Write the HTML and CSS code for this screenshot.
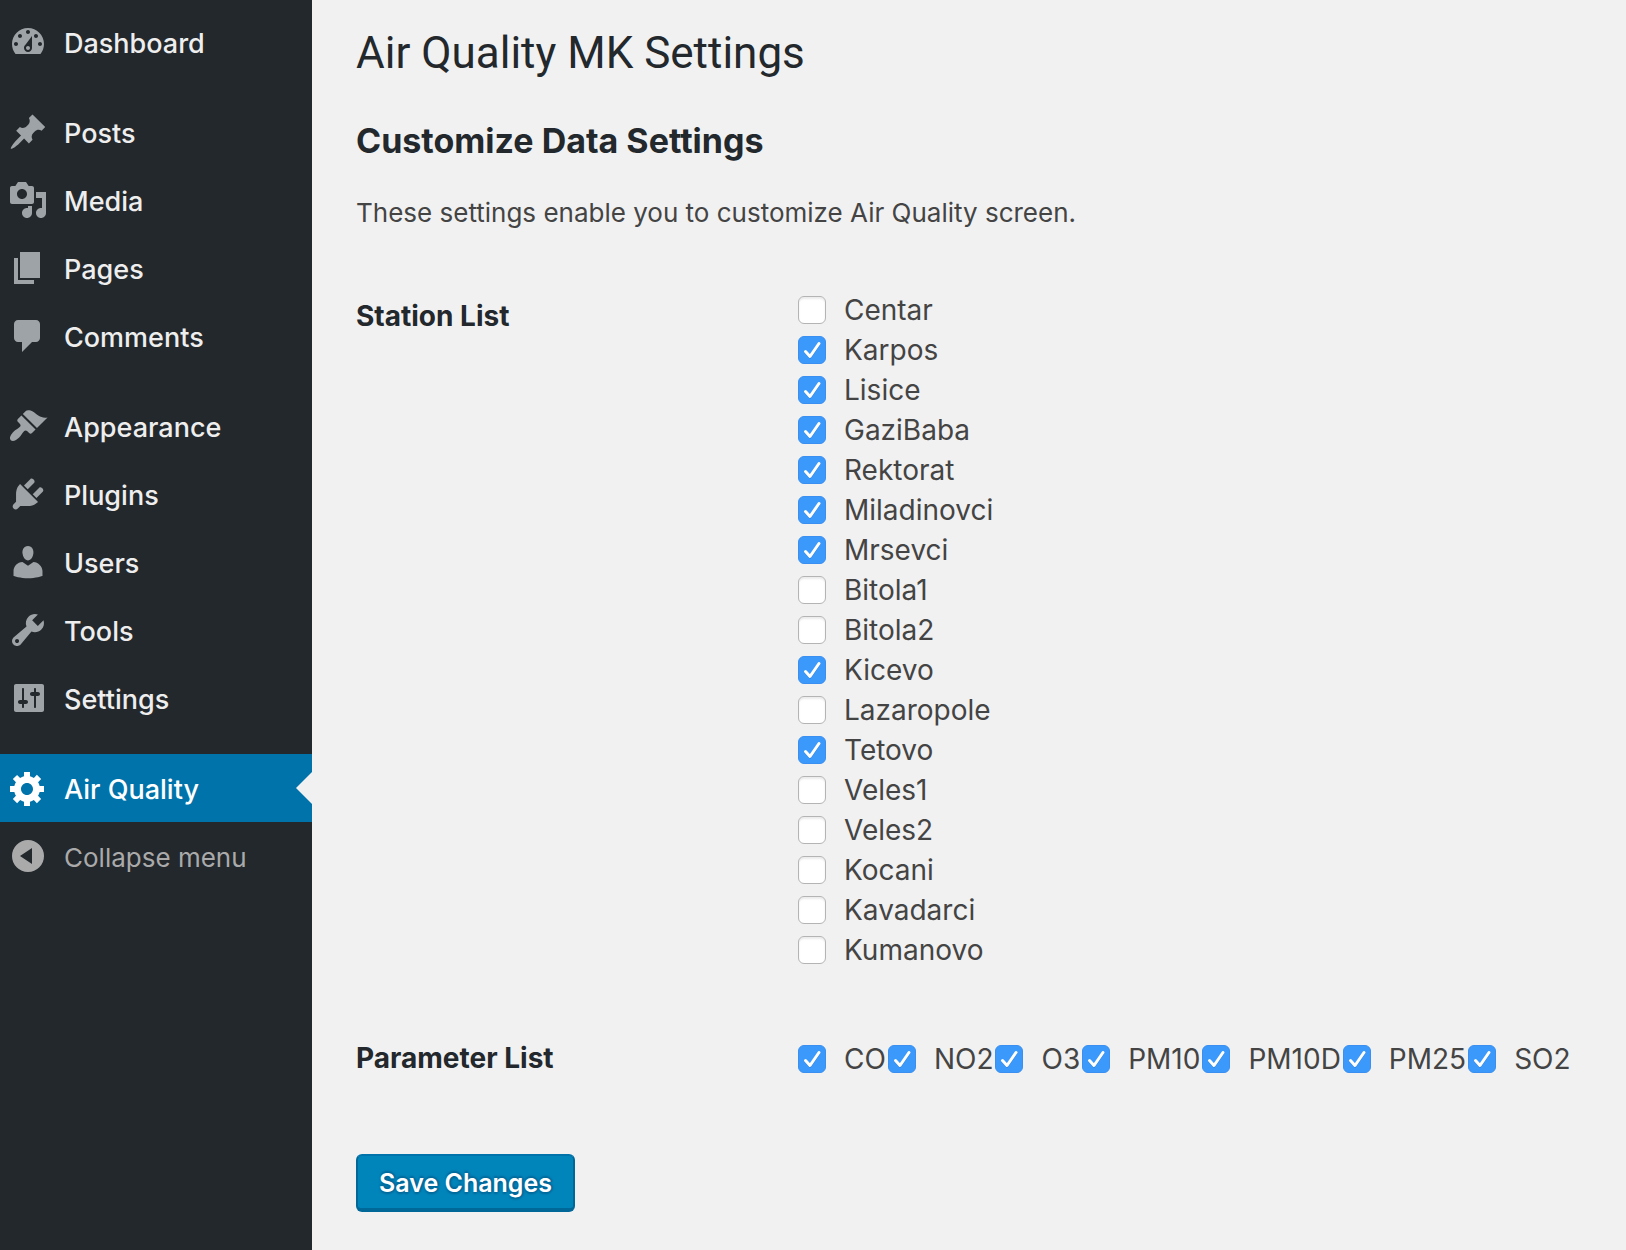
FILE: index.html
```html
<!DOCTYPE html>
<html lang="en">
<head>
<meta charset="utf-8">
<meta name="viewport" content="width=device-width, initial-scale=1">
<title>Air Quality MK Settings</title>
<link rel="stylesheet" href="styles.css">
</head>
<body>
<div class="layout">
  <nav class="sidebar" aria-label="Main menu">
    <ul class="menu">
      <li><a class="menu-item" href="#"><svg class="icon" viewBox="0 0 20 20"><path d="M3.76 16h12.48c1.1-1.37 1.76-3.11 1.76-5 0-4.42-3.58-8-8-8s-8 3.58-8 8c0 1.89.66 3.63 1.76 5zM10 4c.55 0 1 .45 1 1s-.45 1-1 1-1-.45-1-1 .45-1 1-1zM6 6c.55 0 1 .45 1 1s-.45 1-1 1-1-.45-1-1 .45-1 1-1zm8 0c.55 0 1 .45 1 1s-.45 1-1 1-1-.45-1-1 .45-1 1-1zm-5.37 5.55L12 7v6c0 1.1-.9 2-2 2s-2-.9-2-2c0-.57.24-1.08.63-1.45zM4 10c.55 0 1 .45 1 1s-.45 1-1 1-1-.45-1-1 .45-1 1-1zm12 0c.55 0 1 .45 1 1s-.45 1-1 1-1-.45-1-1 .45-1 1-1zm-5 3c0-.55-.45-1-1-1s-1 .45-1 1 .45 1 1 1 1-.45 1-1z"/></svg>Dashboard</a></li>
      <li class="group-start"><a class="menu-item" href="#"><svg class="icon" viewBox="0 0 20 20"><path d="M10.44 3.02l1.82-1.82 6.36 6.35-1.83 1.82c-1.05-.68-2.48-.57-3.41.36l-.75.75c-.92.93-1.04 2.35-.35 3.41l-1.83 1.82-2.41-2.41-2.8 2.79c-.42.42-3.38 2.71-3.8 2.29s1.86-3.39 2.28-3.81l2.79-2.79L4.1 9.36l1.83-1.82c1.05.69 2.48.57 3.4-.36l.75-.75c.93-.92 1.05-2.35.36-3.41z"/></svg>Posts</a></li>
      <li><a class="menu-item" href="#"><svg class="icon" viewBox="0 0 20 20"><path d="M13 11V4c0-.55-.45-1-1-1h-1.67L9 1H5L3.67 3H2c-.55 0-1 .45-1 1v7c0 .55.45 1 1 1h10c.55 0 1-.45 1-1zM7 4.5c1.38 0 2.5 1.12 2.5 2.5S8.38 9.5 7 9.5 4.5 8.38 4.5 7 5.62 4.5 7 4.5zM14 6h5v10.5c0 1.38-1.12 2.5-2.5 2.5S14 17.88 14 16.5s1.12-2.5 2.5-2.5c.17 0 .34.02.5.05V9h-3V6zm-4 8.05V13h2v3.5c0 1.38-1.12 2.5-2.5 2.5S7 17.88 7 16.5 8.12 14 9.5 14c.17 0 .34.02.5.05z"/></svg>Media</a></li>
      <li><a class="menu-item" href="#"><svg class="icon" viewBox="0 0 20 20"><path d="M6 15V2h10v13H6zm-1 1h8v2H3V5h2v11z"/></svg>Pages</a></li>
      <li><a class="menu-item" href="#"><svg class="icon" viewBox="0 0 20 20"><path d="M5 2h9c1.1 0 2 .9 2 2v7c0 1.1-.9 2-2 2h-2l-5 5v-5H5c-1.1 0-2-.9-2-2V4c0-1.1.9-2 2-2z"/></svg>Comments</a></li>
      <li class="group-start"><a class="menu-item" href="#"><svg class="icon" viewBox="0 0 20 20"><path d="M14.48 11.06L7.41 3.99l1.5-1.5c.5-.56 2.3-.47 3.51.32 1.21.8 1.43 1.28 2.91 2.1 1.18.64 2.45 1.26 4.45.85zm-.71.71L6.7 4.7 4.93 6.47c-.39.39-.39 1.02 0 1.41l1.06 1.06c.39.39.39 1.03 0 1.42-.6.6-1.43 1.11-2.21 1.69-.35.26-.7.53-1.01.84C1.43 14.23.4 16.08 1.4 17.07c.99 1 2.84-.03 4.18-1.36.31-.31.58-.66.85-1.02.57-.78 1.08-1.61 1.69-2.21.39-.39 1.02-.39 1.41 0l1.06 1.06c.39.39 1.02.39 1.41 0z"/></svg>Appearance</a></li>
      <li><a class="menu-item" href="#"><svg class="icon" viewBox="0 0 20 20"><path d="M13.11 4.36L9.87 7.6 8 5.73l3.24-3.24c.35-.34 1.05-.2 1.56.32.52.51.66 1.21.31 1.55zm-8 1.77l.91-1.12 9.01 9.01-1.19.84c-.71.71-2.63 1.16-3.82 1.16H6.14L4.9 17.26c-.59.59-1.54.59-2.12 0-.59-.58-.59-1.53 0-2.12l1.24-1.24v-3.88c0-1.13.4-3.19 1.09-3.89zm7.26 3.97l3.24-3.24c.34-.35 1.04-.21 1.55.31.52.51.66 1.21.31 1.55l-3.24 3.25z"/></svg>Plugins</a></li>
      <li><a class="menu-item" href="#"><svg class="icon" viewBox="0 0 20 20"><path d="M10 9.25c-2.27 0-2.73-3.44-2.73-3.44C7 4.02 7.82 2 9.97 2c2.16 0 2.98 2.02 2.71 3.81 0 0-.41 3.44-2.68 3.44zm0 2.57L12.72 10c2.39 0 4.52 2.33 4.52 4.53v2.49s-3.65 1.13-7.24 1.13c-3.65 0-7.24-1.13-7.24-1.13v-2.49c0-2.25 1.94-4.48 4.47-4.48z"/></svg>Users</a></li>
      <li><a class="menu-item" href="#"><svg class="icon" viewBox="0 0 20 20"><path d="M16.68 9.77c-1.34 1.34-3.3 1.67-4.95.99l-5.41 6.52c-.99.99-2.59.99-3.58 0s-.99-2.59 0-3.57l6.52-5.42c-.68-1.65-.35-3.61.99-4.95 1.28-1.28 3.12-1.62 4.72-1.06l-2.89 2.89 2.82 2.82 2.86-2.87c.53 1.58.18 3.39-1.08 4.65zM3.81 16.21c.4.39 1.04.39 1.43 0 .4-.4.4-1.04 0-1.43-.39-.4-1.03-.4-1.43 0-.39.39-.39 1.03 0 1.43z"/></svg>Tools</a></li>
      <li><a class="menu-item" href="#"><svg class="icon" viewBox="0 0 20 20"><path d="M18 16V4c0-.55-.45-1-1-1H4c-.55 0-1 .45-1 1v12c0 .55.45 1 1 1h13c.55 0 1-.45 1-1zM8 11h1c.55 0 1 .45 1 1s-.45 1-1 1H8v1.5c0 .28-.22.5-.5.5s-.5-.22-.5-.5V13H6c-.55 0-1-.45-1-1s.45-1 1-1h1V5.5c0-.28.22-.5.5-.5s.5.22.5.5V11zm5-2h-1c-.55 0-1-.45-1-1s.45-1 1-1h1V5.5c0-.28.22-.5.5-.5s.5.22.5.5V7h1c.55 0 1 .45 1 1s-.45 1-1 1h-1v5.5c0 .28-.22.5-.5.5s-.5-.22-.5-.5V9z"/></svg>Settings</a></li>
      <li class="group-start"><a class="menu-item current" href="#" aria-current="page"><svg class="icon" viewBox="0 0 20 20"><path d="M18 12h-2.18c-.17.7-.44 1.35-.81 1.93l1.54 1.54-2.1 2.1-1.54-1.54c-.58.36-1.23.63-1.91.79V19H8v-2.18c-.68-.16-1.33-.43-1.91-.79l-1.54 1.54-2.12-2.12 1.54-1.54c-.36-.58-.63-1.23-.79-1.91H1V9.03h2.17c.16-.7.44-1.35.8-1.94L2.43 5.55l2.1-2.1 1.54 1.54c.58-.37 1.24-.64 1.93-.81V2h3v2.18c.68.16 1.33.43 1.91.79l1.54-1.54 2.12 2.12-1.54 1.54c.36.59.64 1.24.8 1.94H18V12zm-8.5 1.5c1.66 0 3-1.34 3-3s-1.34-3-3-3-3 1.34-3 3 1.34 3 3 3z"/></svg>Air Quality</a></li>
      <li><button class="menu-item collapse" type="button"><svg class="icon" viewBox="0 0 20 20"><path fill-rule="evenodd" d="M10 2a8 8 0 1 0 0 16a8 8 0 0 0 0-16zM12 6v8l-6-4z"/></svg>Collapse menu</button></li>
    </ul>
  </nav>

  <main class="content">
    <h1>Air Quality MK Settings</h1>
    <h2>Customize Data Settings</h2>
    <p>These settings enable you to customize Air Quality screen.</p>
    <form class="settings">
      <div class="row" role="group" aria-labelledby="stations">
        <h3 id="stations">Station List</h3>
        <div class="stations">
          <label><input type="checkbox">Centar</label>
          <label><input type="checkbox" checked>Karpos</label>
          <label><input type="checkbox" checked>Lisice</label>
          <label><input type="checkbox" checked>GaziBaba</label>
          <label><input type="checkbox" checked>Rektorat</label>
          <label><input type="checkbox" checked>Miladinovci</label>
          <label><input type="checkbox" checked>Mrsevci</label>
          <label><input type="checkbox">Bitola1</label>
          <label><input type="checkbox">Bitola2</label>
          <label><input type="checkbox" checked>Kicevo</label>
          <label><input type="checkbox">Lazaropole</label>
          <label><input type="checkbox" checked>Tetovo</label>
          <label><input type="checkbox">Veles1</label>
          <label><input type="checkbox">Veles2</label>
          <label><input type="checkbox">Kocani</label>
          <label><input type="checkbox">Kavadarci</label>
          <label><input type="checkbox">Kumanovo</label>
        </div>
      </div>
      <div class="row" role="group" aria-labelledby="parameters">
        <h3 id="parameters">Parameter List</h3>
        <div class="parameters">
          <label><input type="checkbox" checked>CO</label>
          <label><input type="checkbox" checked>NO2</label>
          <label><input type="checkbox" checked>O3</label>
          <label><input type="checkbox" checked>PM10</label>
          <label><input type="checkbox" checked>PM10D</label>
          <label><input type="checkbox" checked>PM25</label>
          <label><input type="checkbox" checked>SO2</label>
        </div>
      </div>
      <button class="save" type="submit">Save Changes</button>
    </form>
  </main>
</div>
</body>
</html>
```
FILE: styles.css
```css
* {
  box-sizing: border-box;
}

body {
  margin: 0;
  background: #f1f1f1;
  color: #444;
  font-family: Inter, "Liberation Sans", sans-serif;
  font-size: 28px;
  line-height: 40px;
}

.layout {
  display: flex;
  min-height: 100vh;
}

/* Sidebar */
.sidebar {
  flex: 0 0 312px;
  background: #23282d;
}

.menu {
  list-style: none;
  margin: 0;
  padding: 8px 0;
}

.group-start {
  margin-top: 22px;
}

.menu-item {
  display: flex;
  align-items: flex-start;
  gap: 16px;
  width: 100%;
  padding: 14px 8px 10px;
  color: #eee;
  font-size: 27px;
  font-weight: 500;
  line-height: 44px;
  text-decoration: none;
}

.icon {
  flex: none;
  width: 40px;
  height: 40px;
  fill: #9ea3a8;
}

.current {
  position: relative;
  background: #0073aa;
  color: #fff;
}

.current .icon {
  fill: #fff;
}

.current::after {
  content: "";
  position: absolute;
  top: 18px;
  right: 0;
  border: 16px solid transparent;
  border-left: 0;
  border-right-color: #f1f1f1;
}

.collapse {
  border: 0;
  background: none;
  color: #aaa;
  font-family: inherit;
  font-size: 26px;
  font-weight: 400;
  text-align: left;
}

.collapse .icon {
  fill: #aaa;
}

/* Settings page */
.content {
  flex: 1;
  min-width: 0;
  padding: 24px 40px 38px 44px;
}

h1,
h2,
h3,
p {
  margin: 0;
}

h1,
h2,
h3 {
  color: #23282d;
}

h1 {
  font-family: Roboto, Inter, sans-serif;
  font-size: 44px;
  font-weight: 400;
  line-height: 58px;
}

h2 {
  margin-top: 34px;
  font-size: 34px;
  font-weight: 700;
  line-height: 50px;
}

p {
  margin-top: 27px;
  font-size: 26px;
}

.settings {
  margin-top: 57px;
}

.row {
  display: grid;
  grid-template-columns: 442px 1fr;
}

.row + .row {
  margin-top: 69px;
}

h3 {
  padding-top: 6px;
  font-size: 28px;
  font-weight: 700;
  line-height: 40px;
}

.row + .row h3 {
  padding-top: 0;
  line-height: 38px;
}

.stations {
  display: flex;
  flex-direction: column;
  align-items: flex-start;
}

.parameters {
  display: flex;
  flex-wrap: wrap;
  column-gap: 2px;
}

label {
  display: flex;
  align-items: center;
  gap: 18px;
}

input {
  appearance: none;
  flex: none;
  width: 28px;
  height: 28px;
  margin: 0;
  border: 1px solid #b4b4b4;
  border-radius: 6px;
  background: #fff;
  box-shadow: inset 0 2px 2px #ececec;
}

input:checked {
  border-color: #3a8ff0;
  background: #3b99fc url("data:image/svg+xml,%3Csvg xmlns='http://www.w3.org/2000/svg' viewBox='0 0 26 26' fill='none' stroke-linecap='round' stroke-linejoin='round'%3E%3Cpath d='M6.500 15.500l4.500 5L20 7.500' stroke='%232f7fd8' stroke-width='2.500'/%3E%3Cpath d='M6.500 14.500l4.500 5L20 6.500' stroke='%23fff' stroke-width='3'/%3E%3C/svg%3E") center / 26px 26px no-repeat;
  box-shadow: none;
}

.save {
  margin-top: 75px;
  padding: 10px 21px 8px;
  border: 2px solid #006799;
  border-top-color: #0073aa;
  border-bottom-width: 4px;
  border-radius: 6px;
  background: #0085ba;
  color: #fff;
  font-family: inherit;
  font-size: 25px;
  font-weight: 600;
  line-height: 34px;
  text-shadow: 0 -2px 2px #006799, 2px 0 2px #006799, 0 2px 2px #006799;
}
```
